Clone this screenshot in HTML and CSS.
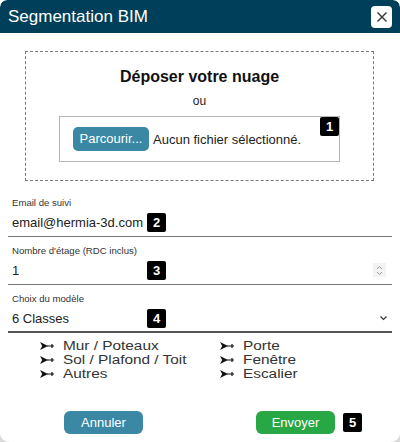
FILE: index.html
```html
<!DOCTYPE html>
<html lang="fr">
<head>
<meta charset="utf-8">
<title>Segmentation BIM</title>
<link rel="stylesheet" href="styles.css">
</head>
<body>
<div class="modal">
  <div class="header">
    <span class="title">Segmentation BIM</span>
    <span class="close"><svg width="12" height="12" viewBox="0 0 12 12"><path d="M1.5 1.5L10.5 10.5M10.5 1.5L1.5 10.5" stroke="#333" stroke-width="1.4" fill="none"/></svg></span>
  </div>
  <div class="content">
    <div class="drop">
      <div class="drop-title">Déposer votre nuage</div>
      <div class="drop-ou">ou</div>
      <div class="filebox">
        <span class="browse">Parcourir...</span>
        <span class="nofile">Aucun fichier sélectionné.</span>
        <span class="badge badge-file">1</span>
      </div>
    </div>

    <div class="field">
      <div class="label">Email de suivi</div>
      <div class="row"><span class="value">email@hermia-3d.com</span><span class="badge">2</span></div>
    </div>
    <div class="field">
      <div class="label">Nombre d'étage (RDC inclus)</div>
      <div class="row"><span class="value">1</span><span class="badge">3</span><span class="spin"><svg width="9" height="13" viewBox="0 0 9 13"><path d="M2 5L4.5 2.5L7 5M2 8L4.5 10.5L7 8" stroke="#999" stroke-width="1" fill="none"/></svg></span></div>
    </div>
    <div class="field field-last">
      <div class="label">Choix du modèle</div>
      <div class="row"><span class="value">6 Classes</span><span class="badge">4</span><span class="chev"><svg width="9" height="6" viewBox="0 0 9 6"><path d="M1.5 1.5L4.5 4.5L7.5 1.5" stroke="#333" stroke-width="1.2" fill="none"/></svg></span></div>
    </div>

    <div class="classes">
      <div class="col">
        <div class="item"><svg class="arr" width="14" height="8" viewBox="0 0 14 8"><path d="M0 0L8 4L0 8L2.2 4Z" fill="#111"/><path d="M7 4H14M12 2V6" stroke="#111" stroke-width="1.2"/></svg><span class="txt">Mur / Poteaux</span></div>
        <div class="item"><svg class="arr" width="14" height="8" viewBox="0 0 14 8"><path d="M0 0L8 4L0 8L2.2 4Z" fill="#111"/><path d="M7 4H14M12 2V6" stroke="#111" stroke-width="1.2"/></svg><span class="txt">Sol / Plafond / Toit</span></div>
        <div class="item"><svg class="arr" width="14" height="8" viewBox="0 0 14 8"><path d="M0 0L8 4L0 8L2.2 4Z" fill="#111"/><path d="M7 4H14M12 2V6" stroke="#111" stroke-width="1.2"/></svg><span class="txt">Autres</span></div>
      </div>
      <div class="col">
        <div class="item"><svg class="arr" width="14" height="8" viewBox="0 0 14 8"><path d="M0 0L8 4L0 8L2.2 4Z" fill="#111"/><path d="M7 4H14M12 2V6" stroke="#111" stroke-width="1.2"/></svg><span class="txt">Porte</span></div>
        <div class="item"><svg class="arr" width="14" height="8" viewBox="0 0 14 8"><path d="M0 0L8 4L0 8L2.2 4Z" fill="#111"/><path d="M7 4H14M12 2V6" stroke="#111" stroke-width="1.2"/></svg><span class="txt">Fenêtre</span></div>
        <div class="item"><svg class="arr" width="14" height="8" viewBox="0 0 14 8"><path d="M0 0L8 4L0 8L2.2 4Z" fill="#111"/><path d="M7 4H14M12 2V6" stroke="#111" stroke-width="1.2"/></svg><span class="txt">Escalier</span></div>
      </div>
    </div>

    <div class="actions">
      <span class="btn btn-cancel">Annuler</span>
      <span class="send-wrap"><span class="btn btn-send">Envoyer</span><span class="badge">5</span></span>
    </div>
  </div>
</div>
</body>
</html>
```
FILE: styles.css
```css
html, body {
  margin: 0;
  padding: 0;
}
body {
  width: 400px;
  height: 442px;
  background: linear-gradient(#ffffff 0, #ffffff 400px, #d8d8d8 442px);
  font-family: "Liberation Sans", Arial, sans-serif;
  color: #222;
  overflow: hidden;
}
.modal {
  width: 400px;
  height: 442px;
  background: #fff;
  border-radius: 7px 7px 9px 9px;
  overflow: hidden;
  display: flex;
  flex-direction: column;
}
.header {
  height: 33px;
  background: #003f5a;
  border-radius: 7px 7px 0 0;
  display: flex;
  align-items: center;
  justify-content: space-between;
  padding: 0 8px 0 8px;
  flex-shrink: 0;
}
.title {
  color: #fff;
  font-size: 17px;
  margin-top: 1px;
}
.close {
  width: 21px;
  height: 22px;
  background: #fff;
  border-radius: 4px;
  display: flex;
  align-items: center;
  justify-content: center;
}
.content {
  flex: 1;
  display: flex;
  flex-direction: column;
}
.drop {
  margin: 18px 26px 0 25px;
  height: 130px;
  box-sizing: border-box;
  border: 1.5px dashed #7a7a7a;
  display: flex;
  flex-direction: column;
  align-items: center;
}
.drop-title {
  font-weight: bold;
  font-size: 16px;
  margin-top: 15px;
  line-height: 19px;
  color: #111;
}
.drop-ou {
  font-size: 12px;
  margin-top: 8px;
  line-height: 14px;
  color: #222;
}
.filebox {
  margin-top: 8px;
  width: 281px;
  height: 46px;
  box-sizing: border-box;
  border: 1px solid #b5b5b5;
  display: flex;
  align-items: center;
  padding-left: 13px;
  position: relative;
}
.browse {
  background: #3a88a4;
  color: #fff;
  font-size: 13px;
  height: 24px;
  line-height: 24px;
  border-radius: 5px;
  width: 76px;
  text-align: center;
}
.nofile {
  font-size: 13px;
  margin-left: 4px;
  color: #222;
}
.badge {
  display: inline-block;
  width: 19px;
  height: 19px;
  background: #000;
  color: #fff;
  font-weight: bold;
  font-size: 13px;
  line-height: 19px;
  text-align: center;
  border-radius: 2px;
  flex-shrink: 0;
}
.badge-file {
  position: absolute;
  top: 0;
  right: 0;
}
.field {
  margin: 8px 8px 0 8px;
  height: 48px;
  box-sizing: border-box;
  border-bottom: 1px solid #777;
  padding: 0 4px;
  display: flex;
  flex-direction: column;
}
.field + .field {
  margin-top: 0;
}
.field-last {
  border-bottom: 2px solid #555;
}
.label {
  font-size: 9.6px;
  line-height: 12px;
  margin-top: 8px;
  color: #333;
}
.row {
  display: flex;
  align-items: center;
  height: 20px;
  margin-top: 3px;
}
.value {
  width: 135px;
  font-size: 13px;
  color: #222;
}
.spin {
  margin-left: auto;
  margin-right: 2px;
  width: 13px;
  height: 14px;
  background: #f3f3f3;
  display: flex;
  align-items: center;
  justify-content: center;
}
.chev {
  margin-left: auto;
  display: flex;
  align-items: center;
}
.classes {
  display: flex;
  padding-left: 40px;
  margin-top: 6px;
}
.col {
  width: 183px;
}
.item {
  font-size: 12px;
  line-height: 14px;
  height: 14px;
  display: flex;
  align-items: center;
  color: #333;
}
.txt {
  display: inline-block;
  transform: scaleX(1.28);
  transform-origin: left center;
  white-space: nowrap;
}
.arr {
  margin-right: 9px;
  flex-shrink: 0;
}
.actions {
  display: flex;
  align-items: center;
  margin-top: 30px;
  padding-left: 64px;
}
.btn {
  display: inline-block;
  width: 79px;
  height: 23px;
  line-height: 23px;
  border-radius: 6px;
  color: #fff;
  text-align: center;
  font-size: 13px;
}
.btn-cancel {
  background: #3a88a4;
}
.send-wrap {
  margin-left: 113px;
  display: flex;
  align-items: center;
  gap: 8px;
}
.btn-send {
  background: #28a745;
}
```
